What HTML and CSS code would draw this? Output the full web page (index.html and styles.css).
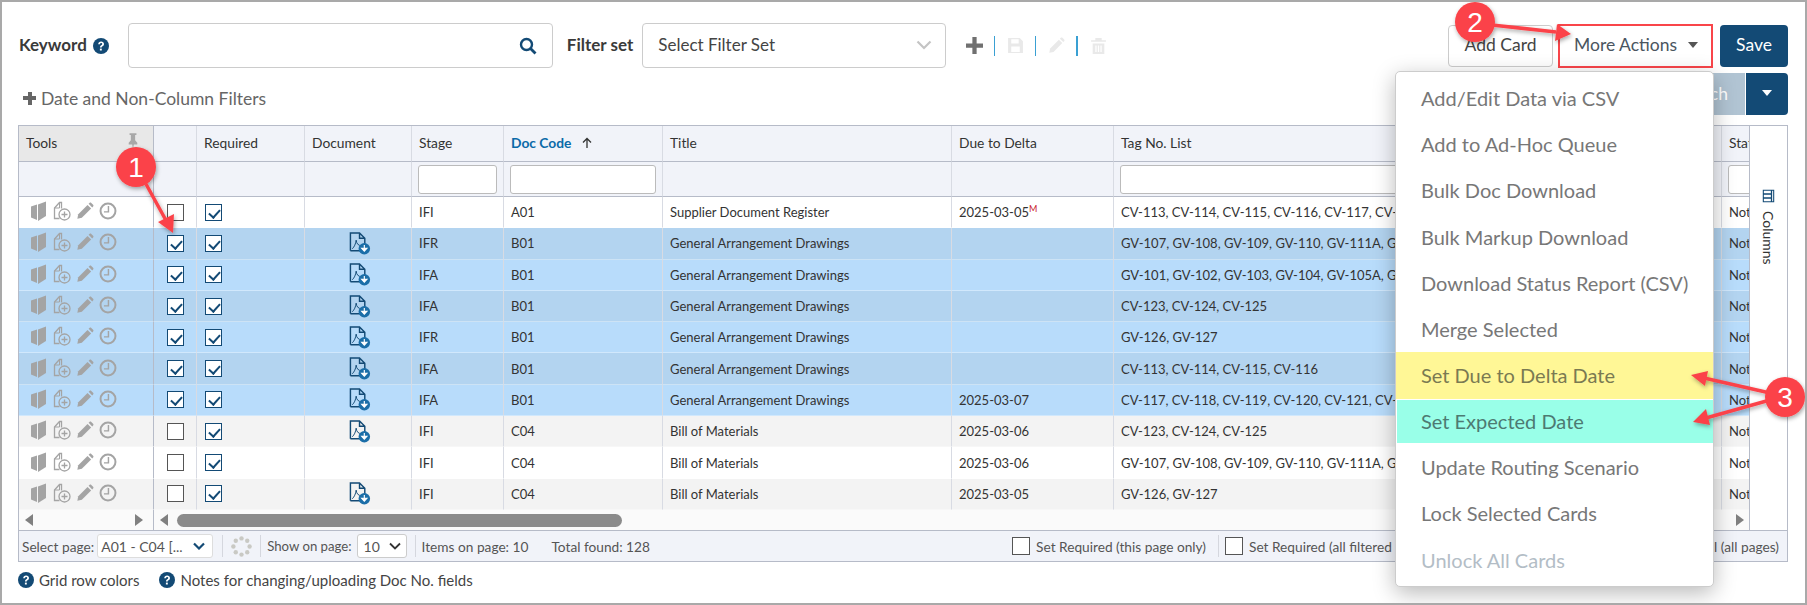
FILE: index.html
```html
<!DOCTYPE html>
<html lang="en">
<head>
<meta charset="utf-8">
<title>Supplier Document Register</title>
<link rel="stylesheet" href="styles.css">
</head>
<body>
<svg class="defs" width="0" height="0" aria-hidden="true">
  <defs>
    <symbol id="i-help" viewBox="0 0 16 16"><circle cx="8" cy="8" r="8" fill="currentColor"/><path d="M5.2 6.2C5.3 4.5 6.500 3.500 8.100 3.500c1.700 0 2.900 1 2.900 2.500 0 1.200-.7 1.800-1.500 2.300-.6.400-.8.700-.8 1.300H7c0-1.100.3-1.700 1.200-2.300.7-.4 1-.8 1-1.300 0-.6-.5-1-1.100-1-.7 0-1.100.4-1.200 1.200z" fill="#fff"/><rect x="6.900" y="10.600" width="1.900" height="1.900" fill="#fff"/></symbol>
    <symbol id="i-book" viewBox="0 0 18 20"><path d="M1 5.500L7 3.500V19L1 16.500z" fill="currentColor"/><path d="M8 3.500L16 .5V15L8 20z" fill="currentColor"/></symbol>
    <symbol id="i-fileplus" viewBox="0 0 18 20"><path d="M6.500 17.500H1.500V7l5-5.500h2V7.500" fill="none" stroke="currentColor" stroke-width="1.300"/><path d="M1.500 7h5V1.500" fill="none" stroke="currentColor" stroke-width="1"/><circle cx="11.500" cy="13.500" r="5.500" fill="none" stroke="currentColor" stroke-width="1.300"/><path d="M11.500 10.500v6M8.500 13.500h6" stroke="currentColor" stroke-width="1.300"/></symbol>
    <symbol id="i-pencil" viewBox="0 0 20 20"><path d="M1.500 18.500l1-5L12.800 3.200l4 4L6.500 17.500z" fill="currentColor"/><path d="M14 2l1-1c.6-.6 1.400-.6 2 0l2 2c.6.600.6 1.400 0 2l-1 1z" fill="currentColor"/></symbol>
    <symbol id="i-clock" viewBox="0 0 20 20"><circle cx="10" cy="10" r="8.300" fill="none" stroke="currentColor" stroke-width="2.200"/><path d="M10.500 4.500v6.500H5.500" fill="none" stroke="currentColor" stroke-width="1.600"/></symbol>
    <symbol id="i-doc" viewBox="0 0 22 24"><path d="M1 19.500V1h9.500L16 6.500V13M1 19.500h10M10.500 1v5.500H16" fill="none" stroke="currentColor" stroke-width="1.500"/><path d="M3 17.500c2-2 3.500-5 4-9 .5 4 2 5.500 6 6" fill="none" stroke="currentColor" stroke-width="1"/><circle cx="15.500" cy="17.500" r="6" fill="#1b6ea8"/><path d="M15.500 13.500v5M12.800 17l2.700 3 2.700-3z" fill="#fff" stroke="#fff" stroke-width="1.200"/></symbol>
  </defs>
</svg>

<main class="page">
  <div class="toolbar">
    <label class="label">Keyword</label>
    <svg class="help help-kw"><use href="#i-help"/></svg>
    <div class="keyword">
      <svg class="search-icon" viewBox="0 0 18 18"><circle cx="7.500" cy="7.500" r="5.500" fill="none" stroke="currentColor" stroke-width="2.400"/><path d="M11.500 11.500l5 5" stroke="currentColor" stroke-width="2.800"/></svg>
    </div>
    <label class="label label-set">Filter set</label>
    <div class="filter-select">
      <span>Select Filter Set</span>
      <svg class="chev" viewBox="0 0 16 10"><path d="M1.500 1.500L8 8l6.500-6.500" fill="none" stroke="currentColor" stroke-width="2.200"/></svg>
    </div>
    <div class="set-tools">
      <svg class="st st-plus" viewBox="0 0 16 16"><path d="M6 0h4v6h6v4h-6v6H6v-6H0V6h6z" fill="currentColor"/></svg>
      <span class="st-sep"></span>
      <svg class="st" viewBox="0 0 16 16"><path d="M1 1h11l3 3v11H1z M4 2v4h7V2z M4 9v5h8V9z" fill="currentColor" fill-rule="evenodd"/></svg>
      <span class="st-sep"></span>
      <svg class="st" viewBox="0 0 20 20"><use href="#i-pencil"/></svg>
      <span class="st-sep st-sep-b"></span>
      <svg class="st" viewBox="0 0 16 16"><path d="M5 1h6v2h4v1.500H1V3h4z M2.500 6h11v10h-11z M5 8v6h1.200V8z M7.400 8v6h1.200V8z M9.800 8v6H11V8z" fill="currentColor" fill-rule="evenodd"/></svg>
    </div>
    <div class="actions">
      <button class="btn btn-light">Add Card</button>
      <button class="btn btn-more">More Actions <span class="caret"></span></button>
      <button class="btn btn-dark">Save</button>
    </div>
  </div>

  <div class="subbar">
    <div class="date-filter"><span class="plus-sm"></span>Date and Non-Column Filters</div>
    <div class="search-group">
      <button class="btn btn-search">Search</button>
      <button class="btn btn-drop"><span class="caret caret-w"></span></button>
    </div>
  </div>

  <section class="grid">
    <div class="grid-body">
      <div class="grid-main">
        <div class="table-clip">
          <table class="data">
            <colgroup>
              <col class="c-tools"><col class="c-sel"><col class="c-req"><col class="c-doc"><col class="c-stage"><col class="c-code"><col class="c-title"><col class="c-due"><col class="c-tag"><col class="c-status">
            </colgroup>
            <thead>
              <tr class="head">
                <th class="th-tools"><div class="tools-head"><span>Tools</span>
                  <svg class="pin" viewBox="0 0 14 18"><path d="M3 0h8v2H9.500v6L12 11v2H8l-1 5-1-5H2v-2l2.500-3V2H3z" fill="currentColor"/></svg></div></th>
                <th></th><th>Required</th><th>Document</th><th>Stage</th>
                <th class="sorted">Doc Code <svg class="sort" viewBox="0 0 12 12"><path d="M6 11V1.500M2 5.500l4-4 4 4" fill="none" stroke="#333" stroke-width="1.300"/></svg></th>
                <th>Title</th><th>Due to Delta</th><th>Tag No. List</th><th>Status</th>
              </tr>
              <tr class="filter">
                <th class="th-tools-f"></th><th></th><th></th><th></th>
                <th><input class="f-in" type="text" aria-label="Stage"></th>
                <th><input class="f-in" type="text" aria-label="Doc Code"></th>
                <th></th><th></th>
                <th><input class="f-in f-tag" type="text" aria-label="Tag No. List"></th>
                <th><input class="f-in" type="text" aria-label="Status"></th>
              </tr>
            </thead>
            <tbody>
              <tr class="r-white">
                <td class="tools"><svg><use href="#i-book"/></svg><svg><use href="#i-fileplus"/></svg><svg><use href="#i-pencil"/></svg><svg><use href="#i-clock"/></svg></td>
                <td class="ck"><span class="box"></span></td><td class="ck ck-req"><span class="box on"></span></td><td></td>
                <td>IFI</td><td>A01</td><td>Supplier Document Register</td><td>2025-03-05<sup class="mark">M</sup></td><td>CV-113, CV-114, CV-115, CV-116, CV-117, CV-118, CV-119</td><td>Not Started</td>
              </tr>
              <tr class="r-sel-a">
                <td class="tools"><svg><use href="#i-book"/></svg><svg><use href="#i-fileplus"/></svg><svg><use href="#i-pencil"/></svg><svg><use href="#i-clock"/></svg></td>
                <td class="ck"><span class="box on"></span></td><td class="ck ck-req"><span class="box on"></span></td><td class="doc"><svg><use href="#i-doc"/></svg></td>
                <td>IFR</td><td>B01</td><td>General Arrangement Drawings</td><td></td><td>GV-107, GV-108, GV-109, GV-110, GV-111A, GV-111B</td><td>Not Started</td>
              </tr>
              <tr class="r-sel-b">
                <td class="tools"><svg><use href="#i-book"/></svg><svg><use href="#i-fileplus"/></svg><svg><use href="#i-pencil"/></svg><svg><use href="#i-clock"/></svg></td>
                <td class="ck"><span class="box on"></span></td><td class="ck ck-req"><span class="box on"></span></td><td class="doc"><svg><use href="#i-doc"/></svg></td>
                <td>IFA</td><td>B01</td><td>General Arrangement Drawings</td><td></td><td>GV-101, GV-102, GV-103, GV-104, GV-105A, GV-105B</td><td>Not Started</td>
              </tr>
              <tr class="r-sel-a">
                <td class="tools"><svg><use href="#i-book"/></svg><svg><use href="#i-fileplus"/></svg><svg><use href="#i-pencil"/></svg><svg><use href="#i-clock"/></svg></td>
                <td class="ck"><span class="box on"></span></td><td class="ck ck-req"><span class="box on"></span></td><td class="doc"><svg><use href="#i-doc"/></svg></td>
                <td>IFA</td><td>B01</td><td>General Arrangement Drawings</td><td></td><td>CV-123, CV-124, CV-125</td><td>Not Started</td>
              </tr>
              <tr class="r-sel-b">
                <td class="tools"><svg><use href="#i-book"/></svg><svg><use href="#i-fileplus"/></svg><svg><use href="#i-pencil"/></svg><svg><use href="#i-clock"/></svg></td>
                <td class="ck"><span class="box on"></span></td><td class="ck ck-req"><span class="box on"></span></td><td class="doc"><svg><use href="#i-doc"/></svg></td>
                <td>IFR</td><td>B01</td><td>General Arrangement Drawings</td><td></td><td>GV-126, GV-127</td><td>Not Started</td>
              </tr>
              <tr class="r-sel-a">
                <td class="tools"><svg><use href="#i-book"/></svg><svg><use href="#i-fileplus"/></svg><svg><use href="#i-pencil"/></svg><svg><use href="#i-clock"/></svg></td>
                <td class="ck"><span class="box on"></span></td><td class="ck ck-req"><span class="box on"></span></td><td class="doc"><svg><use href="#i-doc"/></svg></td>
                <td>IFA</td><td>B01</td><td>General Arrangement Drawings</td><td></td><td>CV-113, CV-114, CV-115, CV-116</td><td>Not Started</td>
              </tr>
              <tr class="r-sel-b">
                <td class="tools"><svg><use href="#i-book"/></svg><svg><use href="#i-fileplus"/></svg><svg><use href="#i-pencil"/></svg><svg><use href="#i-clock"/></svg></td>
                <td class="ck"><span class="box on"></span></td><td class="ck ck-req"><span class="box on"></span></td><td class="doc"><svg><use href="#i-doc"/></svg></td>
                <td>IFA</td><td>B01</td><td>General Arrangement Drawings</td><td>2025-03-07</td><td>CV-117, CV-118, CV-119, CV-120, CV-121, CV-122</td><td>Not Started</td>
              </tr>
              <tr class="r-gray">
                <td class="tools"><svg><use href="#i-book"/></svg><svg><use href="#i-fileplus"/></svg><svg><use href="#i-pencil"/></svg><svg><use href="#i-clock"/></svg></td>
                <td class="ck"><span class="box"></span></td><td class="ck ck-req"><span class="box on"></span></td><td class="doc"><svg><use href="#i-doc"/></svg></td>
                <td>IFI</td><td>C04</td><td>Bill of Materials</td><td>2025-03-06</td><td>CV-123, CV-124, CV-125</td><td>Not Started</td>
              </tr>
              <tr class="r-white">
                <td class="tools"><svg><use href="#i-book"/></svg><svg><use href="#i-fileplus"/></svg><svg><use href="#i-pencil"/></svg><svg><use href="#i-clock"/></svg></td>
                <td class="ck"><span class="box"></span></td><td class="ck ck-req"><span class="box on"></span></td><td></td>
                <td>IFI</td><td>C04</td><td>Bill of Materials</td><td>2025-03-06</td><td>GV-107, GV-108, GV-109, GV-110, GV-111A, GV-111B</td><td>Not Started</td>
              </tr>
              <tr class="r-gray">
                <td class="tools"><svg><use href="#i-book"/></svg><svg><use href="#i-fileplus"/></svg><svg><use href="#i-pencil"/></svg><svg><use href="#i-clock"/></svg></td>
                <td class="ck"><span class="box"></span></td><td class="ck ck-req"><span class="box on"></span></td><td class="doc"><svg><use href="#i-doc"/></svg></td>
                <td>IFI</td><td>C04</td><td>Bill of Materials</td><td>2025-03-05</td><td>GV-126, GV-127</td><td>Not Started</td>
              </tr>
            </tbody>
          </table>
        </div>
        <div class="scrollbars">
          <div class="scroll-left"><span class="arr arr-l"></span><span class="arr arr-r"></span></div>
          <div class="scroll-right"><span class="arr arr-l"></span><span class="thumb"></span><span class="arr arr-r arr-end"></span></div>
        </div>
      </div>
      <aside class="columns-tab">
        <svg class="col-icon" viewBox="0 0 13 12"><path d="M.7.7h11.600v10.600H.7zM.7 3h11.600M4.500 3v8.300M8.500 3v8.300" fill="none" stroke="currentColor" stroke-width="1.300"/></svg>
        <span class="col-text">Columns</span>
      </aside>
    </div>
    <footer class="grid-foot">
      <span class="ft-text">Select page:</span>
      <div class="pg-select pg-a"><span>A01 - C04 [...</span><svg class="mini-chev" viewBox="0 0 12 8"><path d="M1 1.500l5 5 5-5" fill="none" stroke="#134a75" stroke-width="2.200"/></svg></div>
      <span class="vsep"></span>
      <svg class="spinner" viewBox="0 0 22 22"><g fill="#c9c9c4"><circle cx="11" cy="2.500" r="2.300"/><circle cx="17" cy="5" r="2.300"/><circle cx="19.500" cy="11" r="2.300"/><circle cx="17" cy="17" r="2.300"/><circle cx="11" cy="19.500" r="2.300"/><circle cx="5" cy="17" r="2.300"/><circle cx="2.500" cy="11" r="2.300"/><circle cx="5" cy="5" r="2.300"/></g></svg>
      <span class="vsep vsep-b"></span>
      <span class="ft-text ft-show">Show on page:</span>
      <div class="pg-select pg-b"><span>10</span><svg class="mini-chev" viewBox="0 0 12 8"><path d="M1 1.500l5 5 5-5" fill="none" stroke="#333" stroke-width="1.800"/></svg></div>
      <span class="vsep vsep-c"></span>
      <span class="ft-text">Items on page: 10</span>
      <span class="ft-text ft-total">Total found: 128</span>
      <div class="foot-right">
        <span class="box-lg"></span><span class="ft-text">Set Required (this page only)</span>
        <span class="vsep vsep-d"></span>
        <span class="box-lg"></span><span class="ft-text ft-all">Set Required (all filtered pages)</span>
        <span class="ft-text ft-last">Select All (all pages)</span>
      </div>
    </footer>
  </section>

  <div class="notes">
    <svg class="help"><use href="#i-help"/></svg><span>Grid row colors</span>
    <svg class="help help-2"><use href="#i-help"/></svg><span>Notes for changing/uploading Doc No. fields</span>
  </div>

  <ul class="menu">
    <li>Add/Edit Data via CSV</li>
    <li>Add to Ad-Hoc Queue</li>
    <li>Bulk Doc Download</li>
    <li>Bulk Markup Download</li>
    <li>Download Status Report (CSV)</li>
    <li>Merge Selected</li>
    <li class="hl-yellow">Set Due to Delta Date</li>
    <li class="hl-teal">Set Expected Date</li>
    <li>Update Routing Scenario</li>
    <li>Lock Selected Cards</li>
    <li class="disabled">Unlock All Cards</li>
  </ul>

  <svg class="notes-layer" viewBox="0 0 1807 605" width="1807" height="605">
    <defs>
      <filter id="sh" x="-30%" y="-30%" width="160%" height="160%"><feDropShadow dx="1" dy="2" stdDeviation="2" flood-color="#000" flood-opacity=".35"/></filter>
    </defs>
    <g filter="url(#sh)" fill="#fb4348">
      <path d="M146 184L168 224" stroke="#fb4348" stroke-width="3.500"/>
      <path d="M173 233L158 222L174 214z"/>
      <circle cx="136" cy="167" r="20"/>
      <path d="M1492 25L1556 32" stroke="#fb4348" stroke-width="3.500"/>
      <path d="M1571 34L1555 41L1557 24z"/>
      <circle cx="1475" cy="22" r="20"/>
      <path d="M1770 393L1704 378" stroke="#fb4348" stroke-width="3.500"/>
      <path d="M1691 375L1708 371L1705 386z"/>
      <path d="M1770 400L1706 418" stroke="#fb4348" stroke-width="3.500"/>
      <path d="M1693 422L1706 409L1710 425z"/>
      <circle cx="1785" cy="397" r="20"/>
    </g>
    <g class="badge-num">
      <text x="136" y="177">1</text>
      <text x="1475" y="32">2</text>
      <text x="1785" y="407">3</text>
    </g>
  </svg>
</main>
</body>
</html>
```
FILE: styles.css
```css
* { box-sizing: border-box; }
html, body { margin: 0; padding: 0; }
body { font-family: Lato, "Open Sans", sans-serif; color: #333; background: #fff; width: 1807px; height: 605px; overflow: hidden; }
.defs { position: absolute; }

.page { position: relative; width: 1807px; height: 605px; border: 2px solid #a9a9a9; padding: 21px 17px 0 16px; overflow: hidden; }

/* toolbar */
.toolbar { display: flex; align-items: center; height: 45px; }
.label { font-size: 17px; font-weight: 700; color: #3a3a3a; margin-left: 1px; padding-bottom: 2px; }
.help { width: 16px; height: 16px; color: #134a75; flex: none; }
.help-kw { margin-left: 6px; }
.keyword { width: 425px; height: 45px; margin-left: 19px; border: 1px solid #ccc; border-radius: 4px; display: flex; align-items: center; justify-content: flex-end; padding-right: 15px; }
.search-icon { width: 18px; height: 18px; color: #134a75; }
.label-set { margin-left: 14px; }
.filter-select { width: 304px; height: 45px; margin-left: 9px; border: 1px solid #ccc; border-radius: 4px; display: flex; align-items: center; justify-content: space-between; padding: 0 13px 2px 15px; font-size: 17px; color: #444; }
.chev { width: 16px; height: 10px; color: #c4c4c4; }
.set-tools { display: flex; align-items: center; margin-left: 20px; }
.st { width: 17px; height: 17px; color: #e9e9e9; flex: none; }
.st-plus { color: #707070; }
.st-sep { width: 1px; height: 20px; background: #3aa0d3; margin: 0 12px 0 11px; }
.st-sep-b { width: 2px; }
.actions { margin-left: auto; display: flex; align-items: center; }
.btn { font-family: inherit; font-size: 17.500px; height: 42px; border-radius: 4px; padding: 0 0 2px; cursor: pointer; }
.btn-light { width: 105px; background: #fff; border: 1px solid #ccc; color: #444; }
.btn-more { width: 155px; height: 44px; margin-left: 5px; background: #fff; border: 2px solid #f9454a; border-radius: 0; color: #4a5560; display: flex; align-items: center; padding-left: 14px; white-space: pre; }
.btn-dark { width: 68px; margin-left: 7px; background: #134a75; border: 0; color: #fff; }
.caret { display: inline-block; margin-left: 6px; border-left: 5.500px solid transparent; border-right: 5.500px solid transparent; border-top: 6px solid #555; }
.caret-w { border-top-color: #fff; margin: 0; }

/* second row */
.subbar { display: flex; align-items: center; justify-content: space-between; height: 42px; margin-top: 5px; }
.date-filter { font-size: 17.500px; color: #666; display: flex; align-items: center; margin-left: 5px; padding-top: 8px; }
.plus-sm { width: 13px; height: 13px; margin-right: 5px; background: linear-gradient(#666,#666) center/13px 4px no-repeat, linear-gradient(#666,#666) center/4px 13px no-repeat; }
.search-group { display: flex; gap: 1px; }
.btn-search { width: 100px; background: #b1c4d3; border: 0; color: #fff; text-align: right; padding-right: 17px; border-radius: 4px 0 0 4px; }
.btn-drop { width: 42px; background: #134a75; border: 0; border-radius: 0 4px 4px 0; display: flex; align-items: center; justify-content: center; }

/* grid */
.grid { margin-top: 10px; width: 1770px; height: 437px; border: 1px solid #b6bbc8; display: flex; flex-direction: column; }
.grid-body { flex: 1; display: flex; min-height: 0; }
.grid-main { width: 1730px; display: flex; flex-direction: column; overflow: hidden; }
.table-clip { height: 385px; overflow: hidden; }
.data { table-layout: fixed; border-collapse: separate; border-spacing: 0; width: 1803px; font-size: 13px; color: #333; }
.c-tools { width: 135px; } .c-sel { width: 43px; } .c-req { width: 108px; } .c-doc { width: 107px; }
.c-stage { width: 92px; } .c-code { width: 159px; } .c-title { width: 289px; } .c-due { width: 162px; }
.c-tag { width: 608px; } .c-status { width: 100px; }
.data th { background: #f1f3f9; font-weight: 400; text-align: left; padding: 0 7px; border-right: 1px solid #d8dbe3; }
.head th { height: 36px; border-bottom: 1px solid #b6bbc8; font-size: 13.800px; padding-bottom: 2px; }
.filter th { height: 35px; border-bottom: 1px solid #b6bbc8; }
.data .filter th { padding: 0 6px; }
.data .th-tools { background: #e8e8e8; border-right-color: #b6bbc8; }
.data .th-tools-f { border-right-color: #b6bbc8; }
.tools-head { display: flex; justify-content: space-between; align-items: center; padding-right: 7px; }
.pin { width: 12px; height: 16px; color: #a8a8a8; margin-top: -4px; }
.data .sorted { color: #0b6aa8; font-weight: 700; }
.sort { width: 12px; height: 12px; margin-left: 6px; vertical-align: -1px; }
.f-in { display: block; width: 100%; height: 29px; border: 1px solid #bbb; border-radius: 3px; background: #fff; padding: 0; margin: 0; }
.f-tag { width: 575px; }
.data td { height: 31.300px; padding: 0 7px; white-space: nowrap; overflow: hidden; border-right: 1px solid #d8dbe3; border-bottom: 1px solid rgba(255,255,255,.35); }
.data td:first-child { border-right-color: #b6bbc8; }
.r-white td { background: #fff; }
.r-gray td { background: #f3f3f3; }
.r-sel-a td { background: #b3d4f0; }
.r-sel-b td { background: #b8dcfb; }
.data .tools { color: #a4a4a4; padding: 0 0 2px 11px; }
.tools svg { width: 18px; height: 20px; margin-right: 5px; vertical-align: middle; }
.data .ck { padding: 0 0 0 13px; }
.data .ck-req { padding-left: 8px; }
.box { display: block; width: 17px; height: 17px; border: 1px solid #555; background: #fff; position: relative; }
.box.on { border-color: #134a75; }
.box.on::after { content: ""; position: absolute; left: 5px; top: 2px; width: 5px; height: 9px; border: solid #134a75; border-width: 0 2px 2px 0; transform: rotate(42deg); }
.data .doc { text-align: center; color: #134a75; padding: 0 0 0 3px; }
.doc svg { width: 22px; height: 23px; display: block; margin: 0 auto; }
.mark { color: #c9202a; font-size: 9px; line-height: 0; }

/* scroll row */
.scrollbars { height: 20px; display: flex; background: #fafafa; }
.scroll-left { width: 135px; border-right: 1px solid #b6bbc8; display: flex; justify-content: space-between; align-items: center; padding: 0 10px 0 6px; }
.scroll-right { flex: 1; display: flex; align-items: center; padding-left: 6px; }
.arr { width: 0; height: 0; border-top: 6.500px solid transparent; border-bottom: 6.500px solid transparent; }
.arr-l { border-right: 8px solid #808080; }
.arr-r { border-left: 8px solid #808080; }
.arr-end { margin-left: auto; margin-right: 5px; }
.thumb { width: 445px; height: 13px; border-radius: 7px; background: #8b8b8b; margin-left: 9px; }

.columns-tab { flex: 1; background: #fff; border-left: 1px solid #b6bbc8; display: flex; flex-direction: column; align-items: center; padding-top: 64px; color: #333; }
.col-icon { width: 13px; height: 12px; transform: rotate(90deg); color: #134a75; }
.col-text { writing-mode: vertical-rl; font-size: 14px; margin-top: 9px; }

/* footer */
.grid-foot { height: 31px; flex: none; background: #f1f3f9; border-top: 1px solid #b6bbc8; display: flex; align-items: center; padding-left: 3px; font-size: 13.700px; color: #555; }
.ft-text { white-space: nowrap; }
.ft-show { font-size: 13.200px; }
.pg-select { height: 24px; border-radius: 3px; background: #fff; border: 1px solid #ccc; display: flex; align-items: center; justify-content: space-between; color: #555; }
.pg-a { width: 116px; margin-left: 3px; padding: 0 7px 0 3px; border-color: #ddd; font-size: 14px; }
.pg-b { width: 50px; margin-left: 5px; padding: 0 5px 0 6px; font-size: 14px; }
.mini-chev { width: 12px; height: 8px; }
.vsep { width: 1px; height: 22px; background: #d5d7de; margin: 0 7px 0 9px; }
.vsep-b { margin: 0 6px 0 6px; }
.spinner { width: 21px; height: 21px; margin: 0 2px 0 1px; }
.vsep-c { margin: 0 6px 0 8px; }
.ft-total { margin-left: 23px; }
.foot-right { margin-left: auto; display: flex; align-items: center; padding-right: 8px; position: relative; }
.box-lg { width: 18px; height: 18px; border: 1px solid #555; background: #fff; margin-right: 6px; }
.vsep-d { margin: 0 6px 0 12px; }
.ft-last { position: absolute; right: 8px; background: #f1f3f9; padding-left: 20px; }
.ft-all { width: 530px; }

/* notes */
.notes { display: flex; align-items: center; margin-top: 9px; font-size: 15px; color: #444; height: 18px; }
.notes span { margin-left: 5px; }
.help-2 { margin-left: 20px; }

/* dropdown */
.menu { position: absolute; left: 1393px; top: 69px; width: 319px; height: 516px; margin: 0; padding: 3px 0 0; list-style: none; background: #fff; border: 1px solid #ccc; border-radius: 5px; box-shadow: 0 6px 22px rgba(0,0,0,.28); font-size: 20px; color: #777; }
.menu li { height: 46.200px; line-height: 46px; padding-left: 25px; white-space: nowrap; }
.menu .hl-yellow { height: 47px; background: #fff796; color: #7a7a52; }
.menu .hl-teal { background: #99ffe8; color: #4d7a72; margin-left: 1px; padding-left: 24px; height: 43px; line-height: 42px; margin-top: 1px; margin-bottom: 1px; }
.menu .disabled { color: #b3bdc6; }

/* annotations */
.notes-layer { position: absolute; left: -2px; top: -2px; pointer-events: none; }
.badge-num text { font-family: "Liberation Sans", Arial, sans-serif; font-size: 28px; fill: #fff; text-anchor: middle; }
```
